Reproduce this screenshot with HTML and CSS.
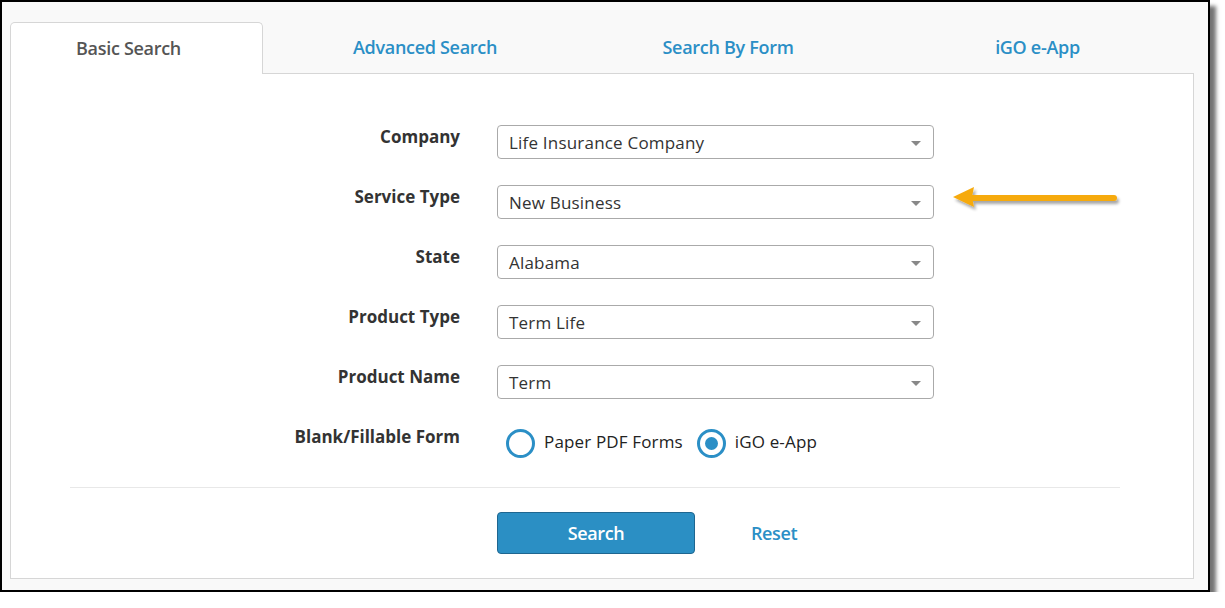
FILE: index.html
```html
<!DOCTYPE html>
<html lang="en">
<head>
<meta charset="utf-8">
<title>Basic Search</title>
<link rel="stylesheet" href="styles.css">
</head>
<body>
<div class="frame">
  <div class="tabs">
    <div class="tab tab-basic active">Basic Search</div>
    <div class="tab tab-adv">Advanced Search</div>
    <div class="tab tab-form">Search By Form</div>
    <div class="tab tab-igo">iGO e-App</div>
  </div>
  <div class="panel">
    <div class="form">
      <div class="label">Company</div>
      <div class="select"><span>Life Insurance Company</span><i class="caret"></i></div>
      <div class="label">Service Type</div>
      <div class="select"><span>New Business</span><i class="caret"></i></div>
      <div class="label">State</div>
      <div class="select"><span>Alabama</span><i class="caret"></i></div>
      <div class="label">Product Type</div>
      <div class="select"><span>Term Life</span><i class="caret"></i></div>
      <div class="label">Product Name</div>
      <div class="select"><span>Term</span><i class="caret"></i></div>
      <div class="label">Blank/Fillable Form</div>
      <div class="radios">
        <div class="radio"><span class="circle"></span><span>Paper PDF Forms</span></div>
        <div class="radio"><span class="circle checked"></span><span>iGO e-App</span></div>
      </div>
    </div>
    <div class="divider"></div>
    <div class="actions">
      <div class="btn">Search</div>
      <div class="reset">Reset</div>
    </div>
  </div>
  <svg class="arrow" width="180" height="40" viewBox="0 0 180 40">
    <defs>
      <filter id="sh" x="-20%" y="-50%" width="140%" height="200%">
        <feGaussianBlur in="SourceAlpha" stdDeviation="1.5"/>
        <feOffset dx="2" dy="3" result="b"/>
        <feComponentTransfer><feFuncA type="linear" slope="0.35"/></feComponentTransfer>
        <feMerge><feMergeNode/><feMergeNode in="SourceGraphic"/></feMerge>
      </filter>
    </defs>
    <g filter="url(#sh)">
      <line x1="22" y1="14" x2="164" y2="14" stroke="#f6aa10" stroke-width="6" stroke-linecap="round"/>
      <polygon points="3,13 24,3 22,13 24,23" fill="#f6aa10"/>
    </g>
  </svg>
</div>
</body>
</html>
```
FILE: styles.css
```css
html, body {
  margin: 0;
  padding: 0;
  background: #ffffff;
}
body {
  font-family: "Open Sans", "Liberation Sans", sans-serif;
  color: #333;
}
.frame {
  position: relative;
  box-sizing: border-box;
  width: 1210px;
  height: 592px;
  border: 2px solid #000;
  background: #f9f9f9;
  padding: 20px 14px 11px 8px;
  box-shadow: 6px 6px 4px rgba(0, 0, 0, 0.55);
  display: flex;
  flex-direction: column;
}
.tabs {
  display: flex;
  height: 51px;
  position: relative;
  z-index: 1;
}
.tab {
  box-sizing: border-box;
  display: flex;
  align-items: center;
  justify-content: center;
  font-size: 18px;
  font-weight: 600;
  letter-spacing: -0.3px;
  color: #2b8fc6;
  padding-bottom: 1px;
}
.tab.active {
  background: #fff;
  color: #555;
  border: 1px solid #d6d6d6;
  border-bottom: none;
  border-radius: 5px 5px 0 0;
  height: 52px;
}
.tab-basic { width: 253px; padding-right: 16px; }
.tab-adv { width: 324px; }
.tab-form { width: 282px; }
.tab-igo { width: 325px; padding-left: 12px; }
.panel {
  flex: 1;
  background: #fff;
  border: 1px solid #d6d6d6;
  padding-top: 51px;
}
.form {
  display: grid;
  grid-template-columns: 449px 437px;
  column-gap: 37px;
  row-gap: 26px;
}
.label {
  text-align: right;
  font-size: 17px;
  font-weight: 700;
  line-height: 20px;
  padding-top: 2px;
  color: #333;
}
.select {
  box-sizing: border-box;
  height: 34px;
  border: 1px solid #aaa;
  border-radius: 4px;
  display: flex;
  align-items: center;
  justify-content: space-between;
  padding: 0 12px 0 11px;
  font-size: 17px;
  color: #333;
}
.select span {
  letter-spacing: 0.2px;
}
.caret {
  width: 0;
  height: 0;
  border-left: 5px solid transparent;
  border-right: 5px solid transparent;
  border-top: 5px solid #888;
  margin-top: 2px;
}
.radios {
  display: flex;
  align-items: center;
  height: 34px;
  margin-top: 0;
  padding-left: 9px;
  gap: 14px;
}
.radio {
  display: flex;
  align-items: center;
  gap: 9px;
  font-size: 17px;
  color: #222;
  letter-spacing: 0.15px;
}
.radio span:last-child {
  margin-top: -2px;
}
.circle {
  box-sizing: border-box;
  width: 29px;
  height: 29px;
  border: 3px solid #2b8fc6;
  border-radius: 50%;
  background: #fff;
  display: flex;
  align-items: center;
  justify-content: center;
  margin-top: 3px;
}
.circle.checked::after {
  content: "";
  width: 13px;
  height: 13px;
  border-radius: 50%;
  background: #2b8fc6;
}
.divider {
  height: 1px;
  background: #e8e8e8;
  margin: 28px 73px 0 59px;
}
.actions {
  display: flex;
  align-items: center;
  margin-top: 24px;
  padding-left: 486px;
}
.btn {
  box-sizing: border-box;
  width: 198px;
  height: 42px;
  background: #2b8fc4;
  border: 1px solid #1e6690;
  border-radius: 4px;
  color: #fff;
  font-size: 18px;
  font-weight: 600;
  letter-spacing: -0.4px;
  display: flex;
  align-items: center;
  justify-content: center;
}
.reset {
  margin-left: 56px;
  color: #2b8fc6;
  font-size: 18px;
  font-weight: 600;
  letter-spacing: -0.4px;
}
.arrow {
  position: absolute;
  left: 948px;
  top: 182px;
}
```
